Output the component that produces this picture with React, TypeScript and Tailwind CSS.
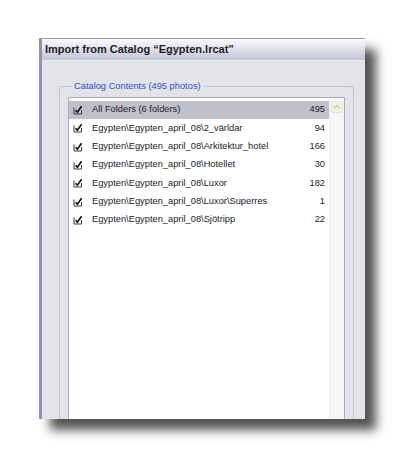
import React from "react";

type Folder = { name: string; count: number; selected?: boolean };

const folders: Folder[] = [
  { name: "All Folders (6 folders)", count: 495, selected: true },
  { name: "Egypten\\Egypten_april_08\\2_världar", count: 94 },
  { name: "Egypten\\Egypten_april_08\\Arkitektur_hotel", count: 166 },
  { name: "Egypten\\Egypten_april_08\\Hotellet", count: 30 },
  { name: "Egypten\\Egypten_april_08\\Luxor", count: 182 },
  { name: "Egypten\\Egypten_april_08\\Luxor\\Superres", count: 1 },
  { name: "Egypten\\Egypten_april_08\\Sjötripp", count: 22 },
];

function CheckMark() {
  return (
    <svg width="10" height="10" viewBox="0 0 10 10" className="shrink-0">
      <path d="M1 2.5 V9 H8.5 V5" fill="none" stroke="#3a3a3a" strokeWidth="1" />
      <path d="M2.6 5.2 L4.4 7.2 L8.6 1.2" fill="none" stroke="#111" strokeWidth="1.7" />
    </svg>
  );
}

function ScrollUp() {
  return (
    <div className="mx-auto mt-[3px] w-[12px] h-[12px] rounded-[2px] border border-[#e2e6d4] bg-[#f0f2e6] flex items-center justify-center">
      <svg width="8" height="6" viewBox="0 0 8 6">
        <path d="M1 4.5 L4 1.5 L7 4.5" fill="none" stroke="#c9cdb2" strokeWidth="1.4" />
      </svg>
    </div>
  );
}

export default function App() {
  return (
    <div
      className="w-[403px] h-[458px] bg-white pl-[39px] pt-[38px]"
      style={{ fontFamily: '"Liberation Sans", Arial, sans-serif' }}
    >
      <div className="w-[326px] h-[381px] overflow-hidden flex flex-col border-t border-t-[#9a9aa2] border-l-[3px] border-l-[#9292ae] bg-[#e3e3ea] shadow-[11px_11px_10px_rgba(0,0,0,0.68)]">
        {/* title bar */}
        <div className="h-[22px] shrink-0 flex items-center pl-[3px] bg-gradient-to-b from-[#fbfbfd] to-[#c3c4d6] border-b border-b-[#eeeef4]">
          <span className="text-[11px] font-bold text-[#1e1e24] leading-none">
            Import from Catalog “Egypten.lrcat”
          </span>
        </div>

        {/* body */}
        <div className="flex-1 pl-[17px] pr-[11px] pt-[20px]">
          <fieldset className="border border-[#c3c3cf] rounded-[3px] h-[420px] px-[8px]">
            <legend className="ml-[4px] px-[2px] text-[9.3px] leading-[11px] text-[#3352c2]">
              Catalog Contents (495 photos)
            </legend>
            <div className="mt-[5px] h-[400px] border border-[#a9a9b9] bg-white flex">
              <div className="flex-1 pt-[3px]">
                {folders.map((f) => (
                  <div
                    key={f.name}
                    className={`h-[18.33px] flex items-center pl-[4px] pr-[4px] text-[9.3px] text-[#222226] ${
                      f.selected ? "bg-[#bfc0cc]" : ""
                    }`}
                  >
                    <CheckMark />
                    <span className="ml-[9px] flex-1 whitespace-nowrap">{f.name}</span>
                    <span>{f.count}</span>
                  </div>
                ))}
              </div>
              <div className="w-[15px] shrink-0 bg-[#f7f7f8] border-l border-l-[#efeff2]">
                <ScrollUp />
              </div>
            </div>
          </fieldset>
        </div>
      </div>
    </div>
  );
}
